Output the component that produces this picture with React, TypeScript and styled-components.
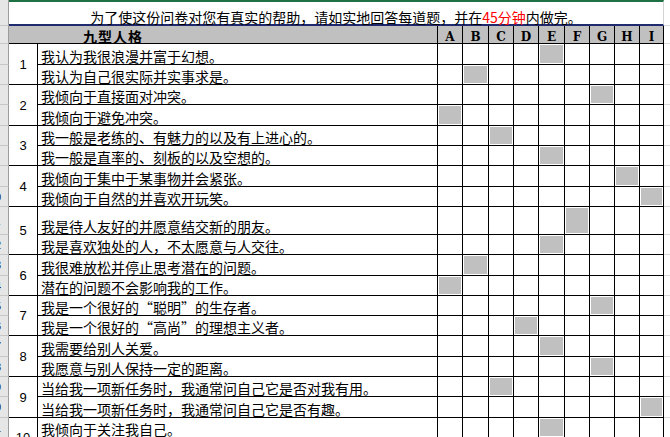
import React from "react";
import styled, { createGlobalStyle } from "styled-components";

const Global = createGlobalStyle`
  * { box-sizing: border-box; }
  html, body { margin: 0; padding: 0; background: #ffffff; overflow: hidden; }
  body { width: 670px; height: 437px; }
`;

const COLS = [25, 26, 25, 25, 26, 25, 25, 25, 24];
const LETTERS = ["A", "B", "C", "D", "E", "F", "G", "H", "I"];
const ROW_H = [21, 20, 20, 21, 20, 20, 21, 20, 28, 20, 21, 20, 20, 20, 21, 20, 20, 21, 20, 20];

type Item = { text: string; pick: number };
type Group = { n: number; items: [Item, Item] };

const DATA: Group[] = [
  { n: 1, items: [{ text: "我认为我很浪漫并富于幻想。", pick: 4 }, { text: "我认为自己很实际并实事求是。", pick: 1 }] },
  { n: 2, items: [{ text: "我倾向于直接面对冲突。", pick: 6 }, { text: "我倾向于避免冲突。", pick: 0 }] },
  { n: 3, items: [{ text: "我一般是老练的、有魅力的以及有上进心的。", pick: 2 }, { text: "我一般是直率的、刻板的以及空想的。", pick: 4 }] },
  { n: 4, items: [{ text: "我倾向于集中于某事物并会紧张。", pick: 7 }, { text: "我倾向于自然的并喜欢开玩笑。", pick: 8 }] },
  { n: 5, items: [{ text: "我是待人友好的并愿意结交新的朋友。", pick: 5 }, { text: "我是喜欢独处的人，不太愿意与人交往。", pick: 4 }] },
  { n: 6, items: [{ text: "我很难放松并停止思考潜在的问题。", pick: 1 }, { text: "潜在的问题不会影响我的工作。", pick: 0 }] },
  { n: 7, items: [{ text: "我是一个很好的“聪明”的生存者。", pick: 6 }, { text: "我是一个很好的“高尚”的理想主义者。", pick: 3 }] },
  { n: 8, items: [{ text: "我需要给别人关爱。", pick: 4 }, { text: "我愿意与别人保持一定的距离。", pick: 6 }] },
  { n: 9, items: [{ text: "当给我一项新任务时，我通常问自己它是否对我有用。", pick: 2 }, { text: "当给我一项新任务时，我通常问自己它是否有趣。", pick: 8 }] },
  { n: 10, items: [{ text: "我倾向于关注我自己。", pick: 4 }, { text: "我倾向于关注他人。", pick: 1 }] },
];

const Sheet = styled.div`
  display: grid;
  grid-template-columns: 9px 29px 400px ${COLS.map((c) => `${c}px`).join(" ")} 1fr;
  grid-template-rows: 26px 18px ${ROW_H.map((h) => `${h}px`).join(" ")};
  width: 670px;
  height: 437px;
  overflow: hidden;
  color: #000;
  font-family: "Noto Sans CJK SC", "Noto Sans", sans-serif;
`;

const RowHead = styled.div`
  background: #e6e6e6;
  border-right: 1px solid #9c9c9c;
  border-bottom: 1px solid #c6c6c6;
  overflow: hidden;
  display: flex;
  justify-content: flex-end;
  align-items: center;
  font: 11px "Liberation Sans", sans-serif;
  color: #222;
`;

const RowNum = styled.span`
  flex: 0 0 26px;
  width: 26px;
  text-align: center;
`;

const Title = styled.div`
  grid-column: 2 / span 11;
  border-top: 2px solid #1e7145;
  border-bottom: 2px solid #1f2a6e;
  border-right: 1px solid #d4d4d4;
  display: flex;
  align-items: flex-end;
  justify-content: center;
  font-size: 14px;
  line-height: 14px;
  white-space: nowrap;
`;

const Red = styled.span`
  color: #ff0000;
`;

const HeadLabel = styled.div`
  grid-column: span 2;
  background: #c0c0c0;
  border-right: 1px solid #000;
  border-bottom: 1px solid #000;
  display: flex;
  align-items: flex-end;
  padding-left: 74px;
  font-size: 14px;
  line-height: 14px;
  font-weight: 700;
  letter-spacing: 1px;
`;

const HeadLetter = styled.div`
  background: #c0c0c0;
  border-right: 1px solid #000;
  border-bottom: 1px solid #000;
  display: flex;
  align-items: flex-end;
  justify-content: center;
  font: 700 12px/12px "DejaVu Serif", serif;
`;

const Pad = styled.div`
  border-bottom: 1px solid #dadada;
`;

const Num = styled.div`
  grid-row: span 2;
  border-right: 1px solid #000;
  border-bottom: 1px solid #000;
  display: flex;
  align-items: center;
  justify-content: center;
  font: 13px "Liberation Sans", sans-serif;
`;

const Question = styled.div`
  border-right: 1px solid #000;
  border-bottom: 1px solid #000;
  padding-left: 3px;
  padding-bottom: 1px;
  display: flex;
  align-items: flex-end;
  font-size: 14px;
  line-height: 14px;
  white-space: nowrap;
  overflow: hidden;
`;

const Answer = styled.div<{ $on: boolean }>`
  border-right: 1px solid #000;
  border-bottom: 1px solid #000;
  background: ${(p) => (p.$on ? "#c0c0c0" : "#ffffff")};
  box-shadow: ${(p) => (p.$on ? "inset 0 0 0 1px #ffffff" : "none")};
`;

export default function App() {
  let excelRow = 2;
  return (
    <>
      <Global />
      <Sheet>
        <RowHead />
        <Title>
          为了使这份问卷对您有真实的帮助，请如实地回答每道题，并在<Red>45分钟</Red>内做完。
        </Title>
        <Pad />

        <RowHead />
        <HeadLabel>九型人格</HeadLabel>
        {LETTERS.map((l) => (
          <HeadLetter key={l}>{l}</HeadLetter>
        ))}
        <Pad />

        {DATA.map((g) =>
          g.items.map((it, i) => {
            excelRow += 1;
            return (
              <React.Fragment key={`${g.n}-${i}`}>
                <RowHead>{excelRow >= 10 && <RowNum>{excelRow}</RowNum>}</RowHead>
                {i === 0 && <Num>{g.n}</Num>}
                <Question>{it.text}</Question>
                {LETTERS.map((l, k) => (
                  <Answer key={l} $on={k === it.pick} />
                ))}
                <Pad />
              </React.Fragment>
            );
          })
        )}
      </Sheet>
    </>
  );
}
